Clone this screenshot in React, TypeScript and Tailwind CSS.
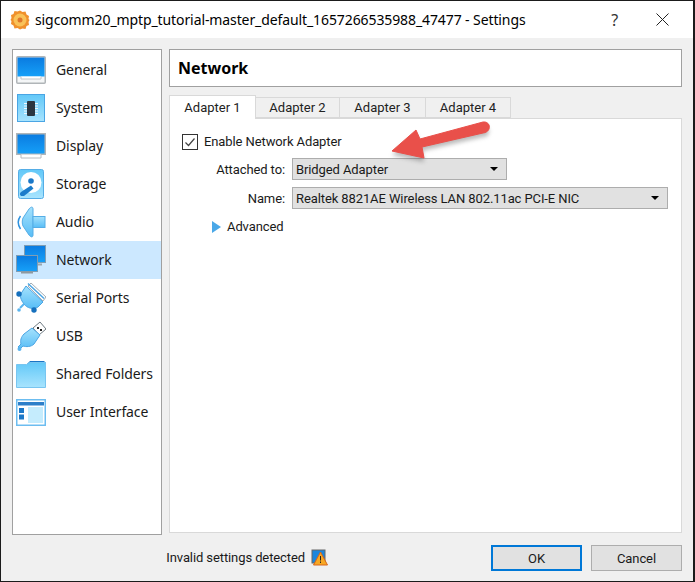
import type { ReactNode } from "react";

function Gradients() {
  return (
    <svg width="0" height="0" className="absolute">
      <defs>
        <linearGradient id="screen" x1="0" y1="0" x2="0" y2="1">
          <stop offset="0" stopColor="#0a7be0" />
          <stop offset="1" stopColor="#16a0f8" />
        </linearGradient>
        <linearGradient id="sky" x1="0" y1="0" x2="0" y2="1">
          <stop offset="0" stopColor="#62c8f8" />
          <stop offset="1" stopColor="#a8e4fe" />
        </linearGradient>
        <linearGradient id="sky2" x1="0" y1="0" x2="0" y2="1">
          <stop offset="0" stopColor="#a5e2fd" />
          <stop offset="1" stopColor="#58bdf6" />
        </linearGradient>
      </defs>
    </svg>
  );
}

function GeneralIcon() {
  return (
    <svg width="30" height="28" viewBox="0 0 30 28">
      <rect x="0.750" y="0.750" width="28.500" height="26.500" rx="1" fill="#f4f6f7" stroke="#b0b5b8" strokeWidth="1.500" />
      <rect x="1.500" y="1.500" width="27" height="19" fill="url(#screen)" />
      <path d="M5 20.500v2.500h20v-2.500" fill="#fff" stroke="#c2c6c9" />
    </svg>
  );
}

function SystemIcon() {
  return (
    <svg width="28" height="28" viewBox="0 0 28 28">
      <rect x="0.500" y="0.500" width="27" height="27" fill="url(#sky)" stroke="#4aa5e4" />
      <path d="M7 9.500h14M7 12h14M7 14.500h14M7 17h14M7 19.500h14" stroke="#eef9ff" />
      <rect x="10" y="7" width="8" height="15" rx="1" fill="#2b3640" />
    </svg>
  );
}

function DisplayIcon() {
  return (
    <svg width="30" height="26" viewBox="0 0 30 26">
      <rect x="0.750" y="0.750" width="28.500" height="20.500" fill="url(#screen)" stroke="#b0b5b8" strokeWidth="1.500" />
      <path d="M5 21.500v3.500h20v-3.500" fill="#fff" stroke="#b8bcbf" />
    </svg>
  );
}

function StorageIcon() {
  return (
    <svg width="26" height="30" viewBox="0 0 26 30">
      <rect x="0.500" y="0.500" width="25" height="29" rx="2" fill="url(#sky)" stroke="#55ade6" />
      <circle cx="13" cy="13.500" r="10.500" fill="#fff" />
      <circle cx="13" cy="12" r="2.800" fill="#1a78c8" />
      <path d="M3 27c-1.500-1-1.500-3 0-4l10-6.500 2.500 3L6 27z" fill="#1a7ccb" />
    </svg>
  );
}

function AudioIcon() {
  return (
    <svg width="29" height="32" viewBox="0 0 29 32">
      <path d="M3.500 10c-3 4-3 8.500 0 13" fill="none" stroke="#2f93e0" strokeWidth="1.500" />
      <path d="M6 12L12 3c2-2.500 4-2.500 4 0v26c0 2.500-2 2.500-4 0L6 20c-1-2-1-6 0-8z" fill="url(#sky2)" stroke="#55ade6" />
      <rect x="16" y="10.500" width="12" height="11" fill="url(#sky2)" stroke="#55ade6" />
    </svg>
  );
}

function NetworkIcon() {
  return (
    <svg width="30" height="30" viewBox="0 0 30 30">
      <path d="M16 19.500h10" stroke="#9aa6ae" strokeWidth="2" />
      <rect x="8.500" y="0.500" width="21" height="17" fill="url(#screen)" stroke="#7f9db4" />
      <rect x="0.500" y="10.500" width="21" height="16" fill="#cce8ff" stroke="#7f9db4" />
      <rect x="1" y="11" width="20" height="15" fill="url(#screen)" />
      <path d="M5 27.500h12" stroke="#8f999f" strokeWidth="2" />
    </svg>
  );
}

function SerialIcon() {
  return (
    <svg width="30" height="32" viewBox="0 0 30 32">
      <path d="M15 1l15 14-3 4L12 4z" fill="#fff" stroke="#a5adb3" />
      <path d="M10 4l17 16-5 5c-5 3-11 1-14-3s-5-8-2-12z" fill="url(#sky2)" stroke="#4aa5e4" />
      <path d="M8 22l-4 4" stroke="#5ab4ee" strokeWidth="2" />
      <path d="M12 1.500l16 15" stroke="#4aa5e4" strokeWidth="1.500" />
      <circle cx="3" cy="12" r="2.700" fill="#1670bd" />
      <circle cx="18" cy="28" r="2.700" fill="#1670bd" />
      <circle cx="3" cy="28" r="1.800" fill="#5ab4ee" />
    </svg>
  );
}

function UsbIcon() {
  return (
    <svg width="29" height="31" viewBox="0 0 29 31">
      <path d="M16 7l7-6 6 7-7 6z" fill="#fff" stroke="#6f7a82" />
      <rect x="20" y="6" width="2" height="2" fill="#222" />
      <rect x="23" y="8" width="2" height="2" fill="#222" />
      <path d="M15 7l8 7-6 9c-3 3-8 3-11 2l-3 3-2-2 3-3c-1-3 0-7 3-10z" fill="url(#sky2)" stroke="#4aa5e4" />
      <circle cx="2.500" cy="28" r="2" fill="#5ab4ee" />
    </svg>
  );
}

function FolderIcon() {
  return (
    <svg width="30" height="28" viewBox="0 0 30 28">
      <path d="M11 4l3-3h14l2 2v5H11z" fill="#1b74c4" />
      <path d="M0.500 4.500h10l3-2h16v25h-29z" fill="url(#sky)" stroke="#78c5f0" />
    </svg>
  );
}

function UiIcon() {
  return (
    <svg width="30" height="27" viewBox="0 0 30 27">
      <rect x="0.750" y="0.750" width="28.500" height="25.500" fill="#fff" stroke="#6cbdf0" strokeWidth="1.500" />
      <rect x="2" y="3" width="26" height="3.500" fill="#2d7fc9" />
      <rect x="12" y="8" width="15" height="16" fill="#c5ecfd" />
      <rect x="3" y="9" width="5" height="5" fill="#1b78c8" />
      <rect x="3" y="15.500" width="5" height="5" fill="#1b78c8" />
    </svg>
  );
}

const pages: { label: string; icon: ReactNode; active?: boolean }[] = [
  { label: "General", icon: <GeneralIcon /> },
  { label: "System", icon: <SystemIcon /> },
  { label: "Display", icon: <DisplayIcon /> },
  { label: "Storage", icon: <StorageIcon /> },
  { label: "Audio", icon: <AudioIcon /> },
  { label: "Network", icon: <NetworkIcon />, active: true },
  { label: "Serial Ports", icon: <SerialIcon /> },
  { label: "USB", icon: <UsbIcon /> },
  { label: "Shared Folders", icon: <FolderIcon /> },
  { label: "User Interface", icon: <UiIcon /> },
];

function Caret() {
  return <span className="h-0 w-0 border-x-[4px] border-t-[4px] border-x-transparent border-t-black" />;
}

function Select({ value, className }: { value: string; className: string }) {
  return (
    <div className={`flex h-[22px] items-center justify-between border border-[#adadad] bg-[#e1e1e1] pl-[3px] pr-[8px] ${className}`}>
      <span>{value}</span>
      <Caret />
    </div>
  );
}

export default function App() {
  return (
    <div className="relative h-[582px] w-[695px] overflow-hidden bg-[#1b1b1b] p-px pr-[2px] font-['Roboto','Noto_Sans',sans-serif] text-[13px] leading-none tracking-[-0.1px] text-[#1a1a1a]">
      <Gradients />
      <div className="flex h-[580px] flex-col bg-[#f0f0f0]">
        {/* title bar */}
        <div className="flex h-[37px] shrink-0 items-center bg-white pl-[9px] font-['Noto_Sans',sans-serif]">
          <svg width="20" height="20" viewBox="0 0 20 20">
            <path d="M10 0.500l2.500 1.500 3-.5 1 3 2.500 1.500-.5 3 1 1-1 2 .5 3-2.500 1-1 3-3-.5L10 19.500l-2.500-1.500-3 .5-1-3-2.500-1.500.5-3-1-1 1-2-.5-3 2.500-1 1-3 3 .5z" fill="#f0912c" />
            <circle cx="10" cy="10" r="6.500" fill="#f9c258" />
            <circle cx="10" cy="10" r="2.500" fill="#e0772a" />
          </svg>
          <span className="ml-[5px] text-[14px] text-black">
            sigcomm20_mptp_tutorial-master_default_1657266535988_47477 - Settings
          </span>
          <span className="ml-auto mr-[38px] text-[16px] text-[#333]">?</span>
          <svg className="mr-[24px]" width="13" height="13" viewBox="0 0 13 13">
            <path d="M0.500 0.500l12 12M12.500 0.500l-12 12" stroke="#222" />
          </svg>
        </div>

        {/* body */}
        <div className="flex flex-1 gap-[7px] pb-[8px] pl-[11px] pr-[11px] pt-[11px]">
          <div className="flex h-[486px] w-[150px] shrink-0 flex-col border border-[#a0a0a0] bg-white pt-px font-['Noto_Sans',sans-serif]">
            {pages.map((page) => (
              <div
                key={page.label}
                className={`flex h-[38px] items-center ${page.active ? "bg-[#cce8ff]" : ""}`}
              >
                <span className="ml-[2px] flex w-[32px] shrink-0 justify-center">{page.icon}</span>
                <span className="ml-[9px] text-[14px]">{page.label}</span>
              </div>
            ))}
          </div>

          <div className="flex min-w-0 flex-1 flex-col">
            <div className="flex h-[38px] shrink-0 items-center border border-[#a0a0a0] bg-white pl-[8px] font-['Noto_Sans',sans-serif] text-[16px] font-bold tracking-normal text-black">
              Network
            </div>

            <div className="mt-[8px] flex items-end tracking-normal text-[#222]">
              <div className="z-10 -mb-px flex h-[24px] w-[87px] items-center justify-center border border-b-0 border-[#d9d9d9] bg-white">
                Adapter 1
              </div>
              <div className="flex h-[21px] w-[84px] items-center justify-center border border-l-0 border-[#d9d9d9] bg-[#f0f0f0]">
                Adapter 2
              </div>
              <div className="flex h-[21px] w-[86px] items-center justify-center border border-l-0 border-[#d9d9d9] bg-[#f0f0f0]">
                Adapter 3
              </div>
              <div className="flex h-[21px] w-[85px] items-center justify-center border border-l-0 border-[#d9d9d9] bg-[#f0f0f0]">
                Adapter 4
              </div>
            </div>

            <div className="flex h-[415px] flex-col border border-[#d9d9d9] bg-white pl-[12px] pr-[13px] pt-[15px]">
              <div className="flex items-center gap-[6px]">
                <span className="flex h-4 w-4 items-center justify-center border border-[#333]">
                  <svg width="12" height="12" viewBox="0 0 12 12">
                    <path d="M1.500 6.500l3 3 6-7" fill="none" stroke="#444" strokeWidth="1.200" />
                  </svg>
                </span>
                <span className="pb-[2px]">Enable Network Adapter</span>
              </div>
              <div className="mt-[8px] flex items-center">
                <span className="w-[103px] text-right">Attached to:</span>
                <Select value="Bridged Adapter" className="ml-[7px] w-[215px]" />
              </div>
              <div className="mt-[7px] flex items-center">
                <span className="w-[103px] text-right">Name:</span>
                <Select value="Realtek 8821AE Wireless LAN 802.11ac PCI-E NIC" className="ml-[7px] flex-1" />
              </div>
              <div className="ml-[30px] mt-[11px] flex items-center gap-[6px]">
                <span className="h-0 w-0 border-y-[6px] border-l-[9px] border-y-transparent border-l-[#4aa8e8]" />
                <span>Advanced</span>
              </div>
            </div>
          </div>
        </div>

        {/* footer */}
        <div className="flex h-[36px] shrink-0 items-start justify-end pr-[11px]">
          <span className="mr-[6px] mt-[6px]">Invalid settings detected</span>
          <svg className="mr-[163px] mt-[4px]" width="17" height="17" viewBox="0 0 17 17">
            <rect x="1" y="1" width="13" height="13" fill="#1c86dc" stroke="#666" />
            <path d="M9.500 3L16.500 16h-14z" fill="#f7a823" stroke="#d8661a" />
            <path d="M9.500 7v4.500M9.500 12.500v1.500" stroke="#222" />
          </svg>
          <div className="mr-[9px] flex h-[26px] w-[91px] items-center justify-center border-2 border-[#0078d7] bg-[#e1e1e1]">OK</div>
          <div className="flex h-[26px] w-[91px] items-center justify-center border border-[#adadad] bg-[#e1e1e1]">Cancel</div>
        </div>
      </div>

      {/* red annotation arrow drawn on top of the shot */}
      <svg className="absolute left-[385px] top-[115px]" width="110" height="52" viewBox="0 0 110 52">
        <path d="M7 40L31 19l4 9 63-17c8 0 8 11 0 11L37 36l2 11z" fill="#555" fillOpacity="0.4" className="blur-[2px]" />
        <path d="M7 36L31 15l4 9 63-17c8-1 9 10 0 11L37 32l2 11z" fill="#e9504a" stroke="#e9504a" strokeLinejoin="round" />
      </svg>
    </div>
  );
}
